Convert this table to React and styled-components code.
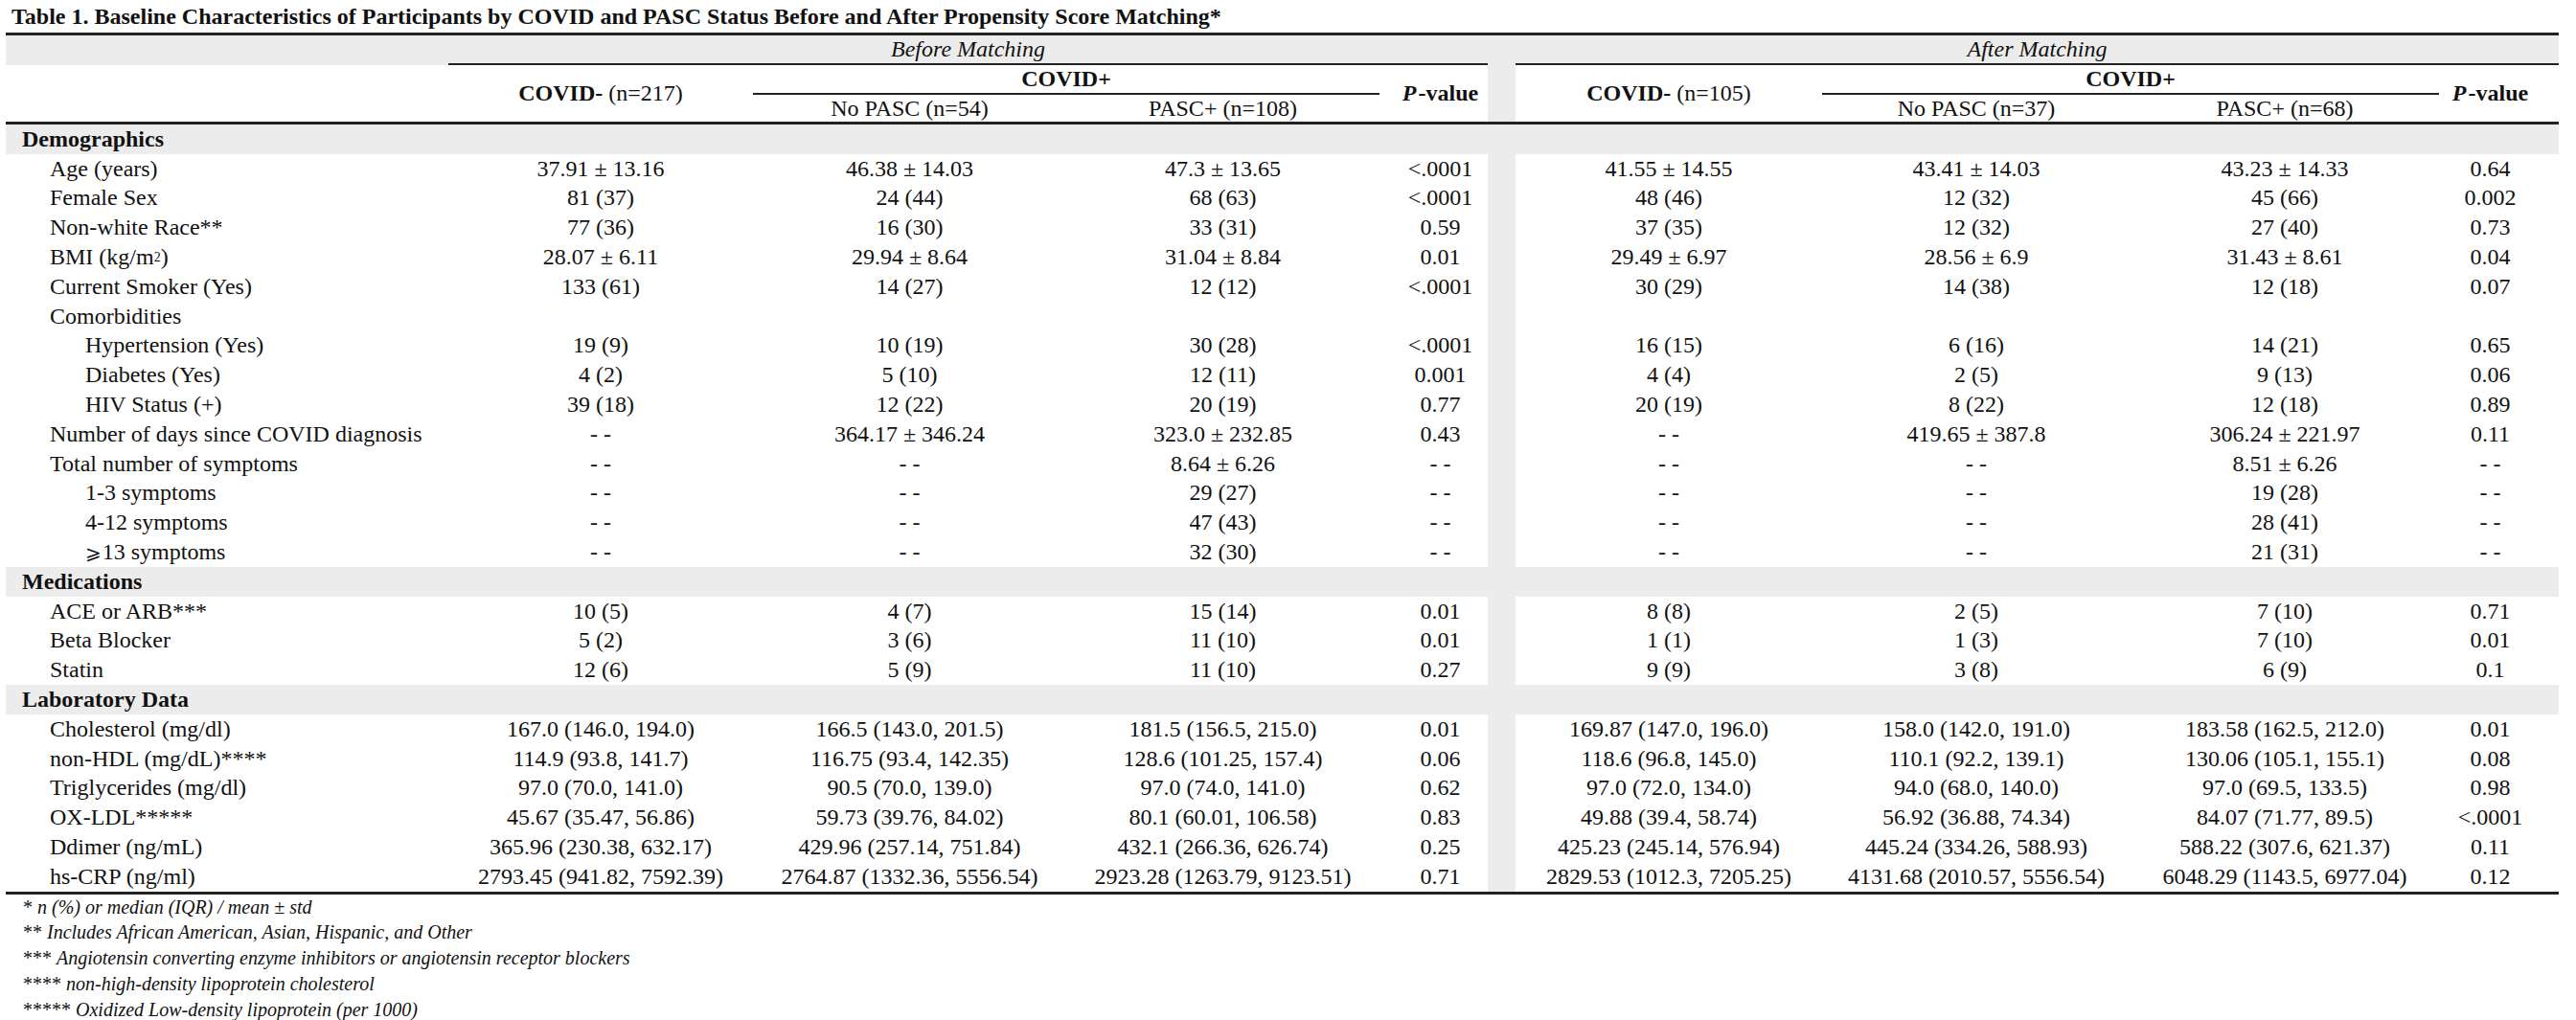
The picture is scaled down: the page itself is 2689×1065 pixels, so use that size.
import styled, { createGlobalStyle } from 'styled-components';

const GlobalStyle = createGlobalStyle`
  html, body {
    margin: 0;
    padding: 0;
    background: #fff;
  }
  body {
    font-family: "Liberation Serif", "Times New Roman", "DejaVu Serif", serif;
    color: #111;
  }
`;

// label | before: covid-, no pasc, pasc+, p | gap | after: covid-, no pasc, pasc+, p
const COLS = '462px 318px 327px 327px 113px 29px 320px 322px 322px 125px';
const GRAY = '#ececec';
const RULE = '#222';

const Page = styled.div`
  width: 2665px;
  padding-left: 6px;
`;

const Title = styled.h1`
  margin: 0;
  padding-left: 6px;
  font-size: 24px;
  font-weight: bold;
  line-height: 34px;
  height: 34px;
  white-space: nowrap;
`;

const Head = styled.div`
  display: grid;
  grid-template-columns: ${COLS};
  grid-template-rows: 31px 31px 28px;
  border-top: 3px solid ${RULE};
  border-bottom: 3px solid ${RULE};
`;

const HCell = styled.div`
  box-sizing: border-box;
  grid-column: ${p => p.$col};
  grid-row: ${p => p.$row};
  background: ${p => (p.$gray ? GRAY : 'transparent')};
  border-bottom: ${p => (p.$rule ? `2px solid ${RULE}` : 'none')};
  display: flex;
  align-items: center;
  justify-content: center;
  padding: ${p => p.$pad || '0'};
  font-size: 24px;
  font-weight: ${p => (p.$bold ? 'bold' : 'normal')};
  font-style: ${p => (p.$italic ? 'italic' : 'normal')};
  white-space: nowrap;
`;

const Bold = styled.b`
  font-weight: bold;
  margin-right: 6px;
`;

const PLetter = styled.i`
  font-style: italic;
  font-weight: bold;
  margin-right: 2px;
`;

const Body = styled.div`
  border-bottom: 3px solid ${RULE};
`;

const Row = styled.div`
  display: grid;
  grid-template-columns: ${COLS};
  height: 30.8px;
  font-size: 24px;
`;

const Band = styled.div`
  grid-column: 1 / -1;
  background: ${GRAY};
  display: flex;
  align-items: center;
  padding-left: 17px;
  font-weight: bold;
  font-size: 24px;
`;

const Label = styled.div`
  display: flex;
  align-items: center;
  padding-left: ${p => (p.$level === 2 ? 83 : 46)}px;
  white-space: nowrap;
`;

const Val = styled.div`
  display: flex;
  align-items: center;
  justify-content: center;
  white-space: nowrap;
  padding: ${p => p.$pad || '0'};
`;

const Gap = styled.div`
  background: ${GRAY};
`;

const Notes = styled.div`
  padding-left: 18px;
  font-size: 20px;
  line-height: 26.75px;
  font-style: italic;
`;

const Star = styled.span`
  font-style: normal;
  margin-right: 5px;
`;

const Ge = styled.span`
  font-family: "DejaVu Serif", "DejaVu Sans", serif;
  font-size: 20px;
  margin-right: 1px;
`;

const D = '- -';

const rows = [
  { band: 'Demographics' },
  { label: 'Age (years)', b: ['37.91 ± 13.16', '46.38 ± 14.03', '47.3 ± 13.65', '<.0001'], a: ['41.55 ± 14.55', '43.41 ± 14.03', '43.23 ± 14.33', '0.64'] },
  { label: 'Female Sex', b: ['81 (37)', '24 (44)', '68 (63)', '<.0001'], a: ['48 (46)', '12 (32)', '45 (66)', '0.002'] },
  { label: 'Non-white Race**', b: ['77 (36)', '16 (30)', '33 (31)', '0.59'], a: ['37 (35)', '12 (32)', '27 (40)', '0.73'] },
  { label: <>BMI (kg/m<sup style={{ fontSize: '14px' }}>2</sup>)</>, b: ['28.07 ± 6.11', '29.94 ± 8.64', '31.04 ± 8.84', '0.01'], a: ['29.49 ± 6.97', '28.56 ± 6.9', '31.43 ± 8.61', '0.04'] },
  { label: 'Current Smoker (Yes)', b: ['133 (61)', '14 (27)', '12 (12)', '<.0001'], a: ['30 (29)', '14 (38)', '12 (18)', '0.07'] },
  { label: 'Comorbidities', b: ['', '', '', ''], a: ['', '', '', ''] },
  { label: 'Hypertension (Yes)', level: 2, b: ['19 (9)', '10 (19)', '30 (28)', '<.0001'], a: ['16 (15)', '6 (16)', '14 (21)', '0.65'] },
  { label: 'Diabetes (Yes)', level: 2, b: ['4 (2)', '5 (10)', '12 (11)', '0.001'], a: ['4 (4)', '2 (5)', '9 (13)', '0.06'] },
  { label: 'HIV Status (+)', level: 2, b: ['39 (18)', '12 (22)', '20 (19)', '0.77'], a: ['20 (19)', '8 (22)', '12 (18)', '0.89'] },
  { label: 'Number of days since COVID diagnosis', b: [D, '364.17 ± 346.24', '323.0 ± 232.85', '0.43'], a: [D, '419.65 ± 387.8', '306.24 ± 221.97', '0.11'] },
  { label: 'Total number of symptoms', b: [D, D, '8.64 ± 6.26', D], a: [D, D, '8.51 ± 6.26', D] },
  { label: '1-3 symptoms', level: 2, b: [D, D, '29 (27)', D], a: [D, D, '19 (28)', D] },
  { label: '4-12 symptoms', level: 2, b: [D, D, '47 (43)', D], a: [D, D, '28 (41)', D] },
  { label: <><Ge>⩾</Ge>13 symptoms</>, level: 2, b: [D, D, '32 (30)', D], a: [D, D, '21 (31)', D] },
  { band: 'Medications' },
  { label: 'ACE or ARB***', b: ['10 (5)', '4 (7)', '15 (14)', '0.01'], a: ['8 (8)', '2 (5)', '7 (10)', '0.71'] },
  { label: 'Beta Blocker', b: ['5 (2)', '3 (6)', '11 (10)', '0.01'], a: ['1 (1)', '1 (3)', '7 (10)', '0.01'] },
  { label: 'Statin', b: ['12 (6)', '5 (9)', '11 (10)', '0.27'], a: ['9 (9)', '3 (8)', '6 (9)', '0.1'] },
  { band: 'Laboratory Data' },
  { label: 'Cholesterol (mg/dl)', b: ['167.0 (146.0, 194.0)', '166.5 (143.0, 201.5)', '181.5 (156.5, 215.0)', '0.01'], a: ['169.87 (147.0, 196.0)', '158.0 (142.0, 191.0)', '183.58 (162.5, 212.0)', '0.01'] },
  { label: 'non-HDL (mg/dL)****', b: ['114.9 (93.8, 141.7)', '116.75 (93.4, 142.35)', '128.6 (101.25, 157.4)', '0.06'], a: ['118.6 (96.8, 145.0)', '110.1 (92.2, 139.1)', '130.06 (105.1, 155.1)', '0.08'] },
  { label: 'Triglycerides (mg/dl)', b: ['97.0 (70.0, 141.0)', '90.5 (70.0, 139.0)', '97.0 (74.0, 141.0)', '0.62'], a: ['97.0 (72.0, 134.0)', '94.0 (68.0, 140.0)', '97.0 (69.5, 133.5)', '0.98'] },
  { label: 'OX-LDL*****', b: ['45.67 (35.47, 56.86)', '59.73 (39.76, 84.02)', '80.1 (60.01, 106.58)', '0.83'], a: ['49.88 (39.4, 58.74)', '56.92 (36.88, 74.34)', '84.07 (71.77, 89.5)', '<.0001'] },
  { label: 'Ddimer (ng/mL)', b: ['365.96 (230.38, 632.17)', '429.96 (257.14, 751.84)', '432.1 (266.36, 626.74)', '0.25'], a: ['425.23 (245.14, 576.94)', '445.24 (334.26, 588.93)', '588.22 (307.6, 621.37)', '0.11'] },
  { label: 'hs-CRP (ng/ml)', b: ['2793.45 (941.82, 7592.39)', '2764.87 (1332.36, 5556.54)', '2923.28 (1263.79, 9123.51)', '0.71'], a: ['2829.53 (1012.3, 7205.25)', '4131.68 (2010.57, 5556.54)', '6048.29 (1143.5, 6977.04)', '0.12'] },
];

const notes = [
  ['*', 'n (%) or median (IQR) / mean ± std'],
  ['**', 'Includes African American, Asian, Hispanic, and Other'],
  ['***', 'Angiotensin converting enzyme inhibitors or angiotensin receptor blockers'],
  ['****', 'non-high-density lipoprotein cholesterol'],
  ['*****', 'Oxidized Low-density lipoprotein (per 1000)'],
];

const PB = '0 0 0 14px';
const PA = '0 18px 0 0';

const Header = () => (
  <Head>
    <HCell $col="1" $row="1" $gray />
    <HCell $col="2 / 6" $row="1" $gray $rule $italic>Before Matching</HCell>
    <HCell $col="6" $row="1" $gray />
    <HCell $col="7 / 11" $row="1" $gray $rule $italic>After Matching</HCell>

    <HCell $col="2" $row="2 / 4"><Bold>COVID-</Bold>(n=217)</HCell>
    <HCell $col="3 / 5" $row="2" $rule $bold>COVID+</HCell>
    <HCell $col="3" $row="3">No PASC (n=54)</HCell>
    <HCell $col="4" $row="3">PASC+ (n=108)</HCell>
    <HCell $col="5" $row="2 / 4" $bold $pad={PB}><PLetter>P</PLetter>-value</HCell>

    <HCell $col="6" $row="2 / 4" $gray />

    <HCell $col="7" $row="2 / 4"><Bold>COVID-</Bold>(n=105)</HCell>
    <HCell $col="8 / 10" $row="2" $rule $bold>COVID+</HCell>
    <HCell $col="8" $row="3">No PASC (n=37)</HCell>
    <HCell $col="9" $row="3">PASC+ (n=68)</HCell>
    <HCell $col="10" $row="2 / 4" $bold $pad={PA}><PLetter>P</PLetter>-value</HCell>
  </Head>
);

export default function App() {
  return (
    <Page>
      <GlobalStyle />
      <Title>Table 1. Baseline Characteristics of Participants by COVID and PASC Status Before and After Propensity Score Matching*</Title>
      <Header />
      <Body>
        {rows.map((r, i) =>
          r.band ? (
            <Row key={i}><Band>{r.band}</Band></Row>
          ) : (
            <Row key={i}>
              <Label $level={r.level}>{r.label}</Label>
              <Val>{r.b[0]}</Val>
              <Val>{r.b[1]}</Val>
              <Val>{r.b[2]}</Val>
              <Val $pad={PB}>{r.b[3]}</Val>
              <Gap />
              <Val>{r.a[0]}</Val>
              <Val>{r.a[1]}</Val>
              <Val>{r.a[2]}</Val>
              <Val $pad={PA}>{r.a[3]}</Val>
            </Row>
          )
        )}
      </Body>
      <Notes>
        {notes.map(([s, t]) => (
          <div key={s}><Star>{s}</Star>{t}</div>
        ))}
      </Notes>
    </Page>
  );
}
